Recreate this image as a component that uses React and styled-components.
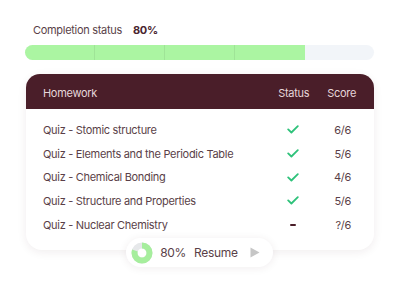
import React from 'react'
import styled, { createGlobalStyle } from 'styled-components'

const GlobalStyle = createGlobalStyle`
  html, body {
    margin: 0;
    padding: 0;
    background: #ffffff;
  }
  body {
    font-family: Inter, "Liberation Sans", sans-serif;
    color: #5a3f48;
    letter-spacing: -0.3px;
  }
`

const Page = styled.div`
  width: 400px;
  height: 300px;
  box-sizing: border-box;
  padding: 22px 26px 0 25px;
  display: flex;
  flex-direction: column;
`

const StatusLine = styled.div`
  display: flex;
  align-items: baseline;
  gap: 11px;
  padding-left: 8px;
  font-size: 11px;
  line-height: 16px;
  color: #5a3f48;
`

const StatusValue = styled.span`
  font-weight: 700;
  color: #4a2530;
`

const Track = styled.div`
  margin-top: 7px;
  height: 15px;
  border-radius: 8px;
  background: #f2f5f9;
  display: flex;
  overflow: hidden;
`

const Segment = styled.div`
  flex: 0 0 70px;
  background: #abf5a2;
  border-right: ${props => (props.last ? 'none' : '1px solid #9fe497')};
  box-sizing: border-box;
`

const Card = styled.div`
  margin-top: 14px;
  margin-left: 1px;
  background: #ffffff;
  border-radius: 16px;
  box-shadow: 0 2px 10px rgba(60, 30, 40, 0.08);
  padding-bottom: 14px;
`

const Header = styled.div`
  height: 35px;
  box-sizing: border-box;
  background: #4a1e29;
  border-radius: 14px 14px 0 0;
  display: flex;
  align-items: center;
  padding: 3px 18px 0 17px;
  font-size: 11px;
  color: #e6d6da;
`

const HeaderTitle = styled.span`
  flex: 1;
`

const HeaderCol = styled.span`
  margin-left: ${props => props.gap}px;
`

const Rows = styled.div`
  padding: 9px 0 0;
`

const Row = styled.div`
  display: grid;
  grid-template-columns: 1fr 24px 46px;
  align-items: center;
  height: 23.7px;
  padding: 0 23px 0 17px;
  font-size: 11px;
  color: #5a3f48;
`

const StatusCell = styled.div`
  display: flex;
  justify-content: center;
`

const Score = styled.div`
  text-align: right;
`

const Dash = styled.div`
  width: 6px;
  height: 2px;
  background: #4a1e29;
  border-radius: 1px;
`

const PillWrap = styled.div`
  display: flex;
  justify-content: center;
  margin-top: -12px;
`

const Pill = styled.div`
  display: flex;
  align-items: center;
  height: 29px;
  padding: 0 13px 0 5px;
  border-radius: 15px;
  background: #ffffff;
  box-shadow: 0 1px 8px rgba(60, 30, 40, 0.08);
  font-size: 12px;
  color: #5a3f48;
`

const PillPercent = styled.span`
  margin-left: 7px;
`

const PillLabel = styled.span`
  margin-left: 8px;
`

const PlayIcon = styled.svg`
  margin-left: 12px;
`

function Check() {
  return (
    <svg width="12" height="9" viewBox="0 0 12 9">
      <path d="M1.2 4.4 L4.4 7.5 L10.8 1.2" fill="none" stroke="#2ec27a" strokeWidth="1.8" strokeLinecap="round" strokeLinejoin="round" />
    </svg>
  )
}

function Donut({ percent }) {
  const r = 7.5
  const c = 2 * Math.PI * r
  return (
    <svg width="22" height="22" viewBox="0 0 22 22">
      <circle cx="11" cy="11" r={r} fill="none" stroke="#e6e8ea" strokeWidth="6" />
      <circle
        cx="11"
        cy="11"
        r={r}
        fill="none"
        stroke="#a6ee9d"
        strokeWidth="6"
        strokeDasharray={`${(c * percent) / 100} ${c}`}
        transform="rotate(-90 11 11)"
      />
    </svg>
  )
}

const quizzes = [
  { name: 'Quiz - Stomic structure', done: true, score: '6/6' },
  { name: 'Quiz - Elements and the Periodic Table', done: true, score: '5/6' },
  { name: 'Quiz - Chemical Bonding', done: true, score: '4/6' },
  { name: 'Quiz - Structure and Properties', done: true, score: '5/6' },
  { name: 'Quiz - Nuclear Chemistry', done: false, score: '?/6' },
]

export default function App() {
  return (
    <Page>
      <GlobalStyle />
      <StatusLine>
        <span>Completion status</span>
        <StatusValue>80%</StatusValue>
      </StatusLine>
      <Track>
        <Segment />
        <Segment />
        <Segment />
        <Segment last />
      </Track>
      <Card>
        <Header>
          <HeaderTitle>Homework</HeaderTitle>
          <HeaderCol gap={0}>Status</HeaderCol>
          <HeaderCol gap={18}>Score</HeaderCol>
        </Header>
        <Rows>
          {quizzes.map(q => (
            <Row key={q.name}>
              <span>{q.name}</span>
              <StatusCell>{q.done ? <Check /> : <Dash />}</StatusCell>
              <Score>{q.score}</Score>
            </Row>
          ))}
        </Rows>
      </Card>
      <PillWrap>
        <Pill>
          <Donut percent={80} />
          <PillPercent>80%</PillPercent>
          <PillLabel>Resume</PillLabel>
          <PlayIcon width="10" height="11" viewBox="0 0 10 11">
            <path d="M0.5 0.5 L9.5 5.5 L0.5 10.5 Z" fill="#c6c6c6" />
          </PlayIcon>
        </Pill>
      </PillWrap>
    </Page>
  )
}
